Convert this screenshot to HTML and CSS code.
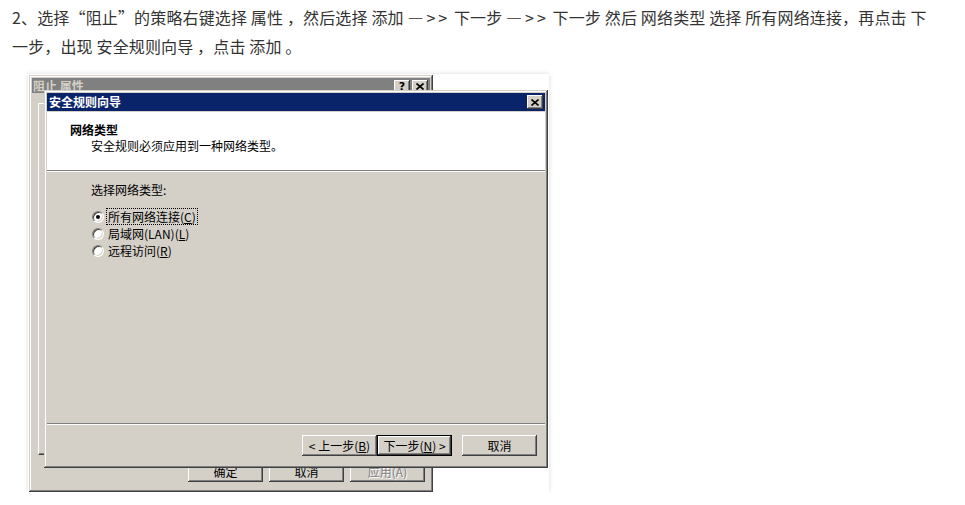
FILE: index.html
```html
<!DOCTYPE html>
<html lang="zh-CN">
<head>
  <meta charset="UTF-8" />
  <title>安全规则向导</title>
  <link rel="stylesheet" href="styles.css">
</head>
<body>
  <div class="post">
    <p class="step">2、选择“阻止”的策略右键选择 属性 ，然后选择 添加 <span class="arrow">—&gt;&gt;</span> 下一步 <span class="arrow">—&gt;&gt;</span> 下一步 然后 网络类型 选择 所有网络连接，再点击 下一步，出现 安全规则向导 ，点击 添加 。</p>

    <div class="shot">
      <!-- 后面的窗口 -->
      <div class="win win-back">
        <div class="titlebar">
          <span class="title">阻止 属性</span>
          <span class="tb-btn tb-help">?</span>
          <span class="tb-btn">
            <svg width="8" height="7" viewBox="0 0 8 7"><path d="M0.5 0.5 L7.5 6.5 M7.5 0.5 L0.5 6.5" stroke="#000" stroke-width="1.6"/></svg>
          </span>
        </div>
        <div class="tabpanel"></div>
        <div class="back-buttons">
          <button class="btn">确定</button>
          <button class="btn">取消</button>
          <button class="btn btn-off">应用(A)</button>
        </div>
      </div>

      <!-- 向导 -->
      <div class="win win-front">
        <div class="titlebar">
          <span class="title">安全规则向导</span>
          <span class="tb-btn">
            <svg width="8" height="7" viewBox="0 0 8 7"><path d="M0.5 0.5 L7.5 6.5 M7.5 0.5 L0.5 6.5" stroke="#000" stroke-width="1.6"/></svg>
          </span>
        </div>

        <div class="wiz-head">
          <div class="wiz-title">网络类型</div>
          <div class="wiz-sub">安全规则必须应用到一种网络类型。</div>
        </div>
        <div class="sep"></div>

        <div class="wiz-body">
          <div class="pick-label">选择网络类型:</div>
          <div class="radio-row">
            <span class="radio checked"></span>
            <span class="radio-text focus">所有网络连接(<u>C</u>)</span>
          </div>
          <div class="radio-row">
            <span class="radio"></span>
            <span class="radio-text">局域网(LAN)(<u>L</u>)</span>
          </div>
          <div class="radio-row">
            <span class="radio"></span>
            <span class="radio-text">远程访问(<u>R</u>)</span>
          </div>
        </div>
        <div class="sep"></div>

        <div class="wiz-foot">
          <button class="btn">&lt; 上一步(<u>B</u>)</button>
          <button class="btn btn-default">下一步(<u>N</u>) &gt;</button>
          <button class="btn btn-cancel">取消</button>
        </div>
      </div>
    </div>
  </div>
</body>
</html>
```

FILE: styles.css
```css
body {
  margin: 0;
  background-color: #fff;
  font-family: "Noto Sans CJK SC", sans-serif;
}

.post {
  padding: 3px 12px 0;
}

.step {
  margin: 0;
  width: 930px;
  font-size: 16px;
  line-height: 29px;
  letter-spacing: 0.15px;
  color: #333;
}

.arrow {
  letter-spacing: 3px;
}

.shot {
  position: relative;
  margin: 13px 0 0 16px;
  width: 521px;
  height: 418px;
  background-color: #fff;
  box-shadow: 0 0 5px rgba(0, 0, 0, 0.15);
}

/* Windows 2000 风格窗口 */
.win {
  position: absolute;
  box-sizing: border-box;
  display: flex;
  flex-direction: column;
  padding: 3px;
  background-color: #d4d0c8;
  font-size: 12px;
  line-height: 14px;
  color: #000;
  box-shadow: inset -1px -1px #404040, inset 1px 1px #d4d0c8,
              inset -2px -2px #808080, inset 2px 2px #fff;
}

.win-back {
  left: 1px;
  top: 1px;
  width: 404px;
  height: 417px;
}

.win-front {
  left: 16px;
  top: 16px;
  width: 504px;
  height: 378px;
}

.titlebar {
  display: flex;
  align-items: center;
  height: 18px;
  padding: 0 2px;
  font-weight: bold;
  color: #fff;
  background-color: #0a246a;
}

.win-back .titlebar {
  height: 15px;
  padding-left: 1px;
  color: #d4d0c8;
  background-color: #808080;
}

.win-front .titlebar {
  margin-bottom: 1px;
}

.title {
  flex: 1;
}

.tb-btn {
  box-sizing: border-box;
  display: flex;
  align-items: center;
  justify-content: center;
  width: 16px;
  height: 14px;
  margin-left: 2px;
  background-color: #d4d0c8;
  color: #000;
  font-size: 12px;
  box-shadow: inset -1px -1px #404040, inset 1px 1px #fff,
              inset -2px -2px #808080;
}

.win-back .tb-btn {
  height: 13px;
  margin-top: 2px;
}

.tb-help {
  font-family: "DejaVu Sans", sans-serif;
  font-weight: bold;
  font-size: 11px;
}

.tabpanel {
  box-sizing: border-box;
  height: 352px;
  margin: 10px 5px 0 6px;
  border-top: 1px solid #fff;
  border-left: 1px solid #fff;
  border-right: 1px solid #404040;
  border-bottom: 1px solid #404040;
  box-shadow: inset -1px -1px #808080;
}

.back-buttons {
  display: flex;
  justify-content: flex-end;
  gap: 6px;
  margin-top: 6px;
  padding-right: 5px;
}

.btn {
  box-sizing: border-box;
  width: 75px;
  height: 21px;
  padding: 0;
  border: none;
  background-color: #d4d0c8;
  font-family: "Noto Sans CJK SC", sans-serif;
  font-size: 12px;
  line-height: 21px;
  color: #000;
  box-shadow: inset -1px -1px #404040, inset 1px 1px #fff,
              inset -2px -2px #808080, inset 2px 2px #d4d0c8;
}

.btn-off {
  color: #808080;
  text-shadow: 1px 1px #fff;
}

.btn-default {
  box-shadow: inset 0 0 0 1px #000, inset -2px -2px #404040,
              inset 2px 2px #fff, inset -3px -3px #808080;
}

.btn-cancel {
  margin-left: 10px;
}

/* 向导内容 */
.wiz-head {
  height: 58px;
  box-sizing: border-box;
  padding: 11px 0 0 23px;
  background-color: #fff;
}

.wiz-title {
  font-weight: bold;
}

.wiz-sub {
  margin: 2px 0 0 21px;
}

.sep {
  height: 1px;
  border-top: 1px solid #808080;
  background-color: #fff;
}

.wiz-body {
  height: 251px;
  box-sizing: border-box;
  padding: 11px 0 0 44px;
}

.pick-label {
  margin-bottom: 11px;
}

.radio-row {
  display: flex;
  align-items: center;
  height: 17px;
}

.radio {
  position: relative;
  box-sizing: border-box;
  width: 12px;
  height: 12px;
  margin: 0 3px 0 1px;
  border-radius: 50%;
  border: 1px solid;
  border-color: #808080 #fff #fff #808080;
  background-color: #fff;
  box-shadow: inset 1px 1px #404040, inset -1px -1px #d4d0c8;
}

.radio.checked::after {
  content: "";
  position: absolute;
  left: 3px;
  top: 3px;
  width: 4px;
  height: 4px;
  border-radius: 50%;
  background-color: #000;
}

.radio-text {
  padding: 0 1px;
  line-height: 15px;
}

.focus {
  outline: 1px dotted #000;
}

.wiz-foot {
  display: flex;
  justify-content: flex-end;
  padding: 10px 8px 0 0;
}
```
